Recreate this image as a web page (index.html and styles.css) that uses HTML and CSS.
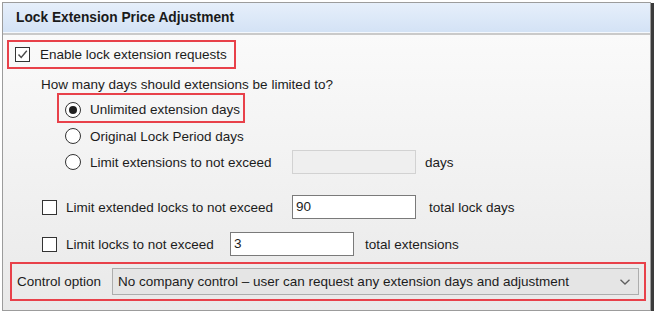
FILE: index.html
```html
<!DOCTYPE html>
<html lang="en">
<head>
    <meta charset="UTF-8">
    <title>Lock Extension Price Adjustment</title>
    <link rel="stylesheet" href="styles.css">
</head>
<body>
    <div class="panel">
        <div class="panel-header">Lock Extension Price Adjustment</div>
        <div class="panel-body">
            <div class="callout callout-enable">
                <span class="check checked">
                    <svg width="13" height="13" viewBox="0 0 13 13"><polyline points="2.5,6.5 5.2,9.5 10.8,2.8" fill="none" stroke="#4a4a4a" stroke-width="1.4"/></svg>
                </span>
                <span class="text">Enable lock extension requests</span>
            </div>

            <div class="question">How many days should extensions be limited to?</div>

            <div class="callout callout-radio">
                <span class="radio selected"></span>
                <span class="text">Unlimited extension days</span>
            </div>
            <div class="row radio-row">
                <span class="radio"></span>
                <span class="text">Original Lock Period days</span>
            </div>
            <div class="row radio-row">
                <span class="radio"></span>
                <span class="text label-ext">Limit extensions to not exceed</span>
                <span class="field disabled"></span>
                <span class="text unit unit-days">days</span>
            </div>

            <div class="row check-row check-row-first">
                <span class="check"></span>
                <span class="text label-locks">Limit extended locks to not exceed</span>
                <span class="field">90</span>
                <span class="text unit unit-lock">total lock days</span>
            </div>
            <div class="row check-row">
                <span class="check"></span>
                <span class="text label-count">Limit locks to not exceed</span>
                <span class="field">3</span>
                <span class="text unit unit-ext">total extensions</span>
            </div>

            <div class="callout callout-control">
                <span class="text control-label">Control option</span>
                <div class="select">
                    <span class="text">No company control – user can request any extension days and adjustment</span>
                    <svg width="12" height="8" viewBox="0 0 12 8"><polyline points="1.5,1.8 6,6 10.5,1.8" fill="none" stroke="#606060" stroke-width="1.3"/></svg>
                </div>
            </div>
        </div>
    </div>
</body>
</html>
```

FILE: styles.css
```css
body {
    margin: 0;
    background-color: #ffffff;
    font-family: "Liberation Sans", Arial, sans-serif;
    font-size: 13.5px;
    color: #1c1c1c;
}
.panel {
    box-sizing: border-box;
    width: 649px;
    height: 309px;
    margin: 2px 0 0 2px;
    border: 1px solid #9c9c9c;
    box-shadow: 2px 2px 0 1px #3b3b3b;
    background: linear-gradient(#fcfcfc, #e9e9e9);
    overflow: hidden;
}
.panel-header {
    height: 30px;
    line-height: 30px;
    padding-left: 13px;
    font-size: 13.75px;
    font-weight: bold;
    color: #1a1a1a;
    background: linear-gradient(#e6effb, #d3e2f5);
    border-bottom: 2px solid #cacaca;
    box-shadow: inset 0 -1px 0 #f4f8fd;
}
.panel-body {
    display: flex;
    flex-direction: column;
    align-items: flex-start;
    padding-top: 5px;
}
.callout {
    box-sizing: border-box;
    display: flex;
    align-items: center;
    border: 2px solid #e8414a;
}
.callout-enable {
    margin-left: 4px;
    width: 229px;
    height: 29px;
    padding-left: 6px;
}
.callout-enable .text {
    margin-left: 10px;
}
.question {
    margin: 8px 0 0 38px;
    line-height: 16px;
}
.callout-radio {
    margin-left: 54px;
    width: 188px;
    height: 30px;
    padding: 3px 0 0 6px;
}
.callout-radio .text,
.radio-row .radio + .text {
    margin-left: 9px;
}
.row {
    display: flex;
    align-items: center;
    height: 26px;
}
.radio-row {
    margin-left: 62px;
}
.check-row {
    margin: 11px 0 0 39px;
}
.check-row-first {
    margin-top: 19px;
}
.check-row .check + .text {
    margin-left: 9px;
}
.check {
    box-sizing: border-box;
    width: 15px;
    height: 15px;
    border: 1px solid #333333;
    background-color: #ffffff;
    display: flex;
    align-items: center;
    justify-content: center;
}
.radio {
    box-sizing: border-box;
    width: 16px;
    height: 16px;
    border: 1px solid #333333;
    border-radius: 50%;
    background-color: #ffffff;
    display: flex;
    align-items: center;
    justify-content: center;
}
.radio.selected::after {
    content: "";
    width: 8px;
    height: 8px;
    border-radius: 50%;
    background-color: #1f1f1f;
}
.label-ext {
    width: 202px;
}
.label-locks {
    width: 226px;
}
.label-count {
    width: 164px;
}
.field {
    box-sizing: border-box;
    width: 124px;
    height: 24px;
    line-height: 22px;
    padding-left: 3px;
    border: 1px solid #7a7a7a;
    background-color: #ffffff;
}
.field.disabled {
    border-color: #d2d2d2;
    background-color: #efefef;
}
.unit-days {
    margin-left: 9px;
}
.unit-lock {
    margin-left: 13px;
}
.unit-ext {
    margin-left: 11px;
}
.callout-control {
    margin: 5px 0 0 7px;
    width: 636px;
    height: 39px;
    padding-left: 5px;
}
.control-label {
    width: 95px;
}
.select {
    box-sizing: border-box;
    display: flex;
    align-items: center;
    justify-content: space-between;
    width: 527px;
    height: 27px;
    padding: 0 7px 0 5px;
    border: 1px solid #adadad;
    background-color: #e5e5e5;
}
```
